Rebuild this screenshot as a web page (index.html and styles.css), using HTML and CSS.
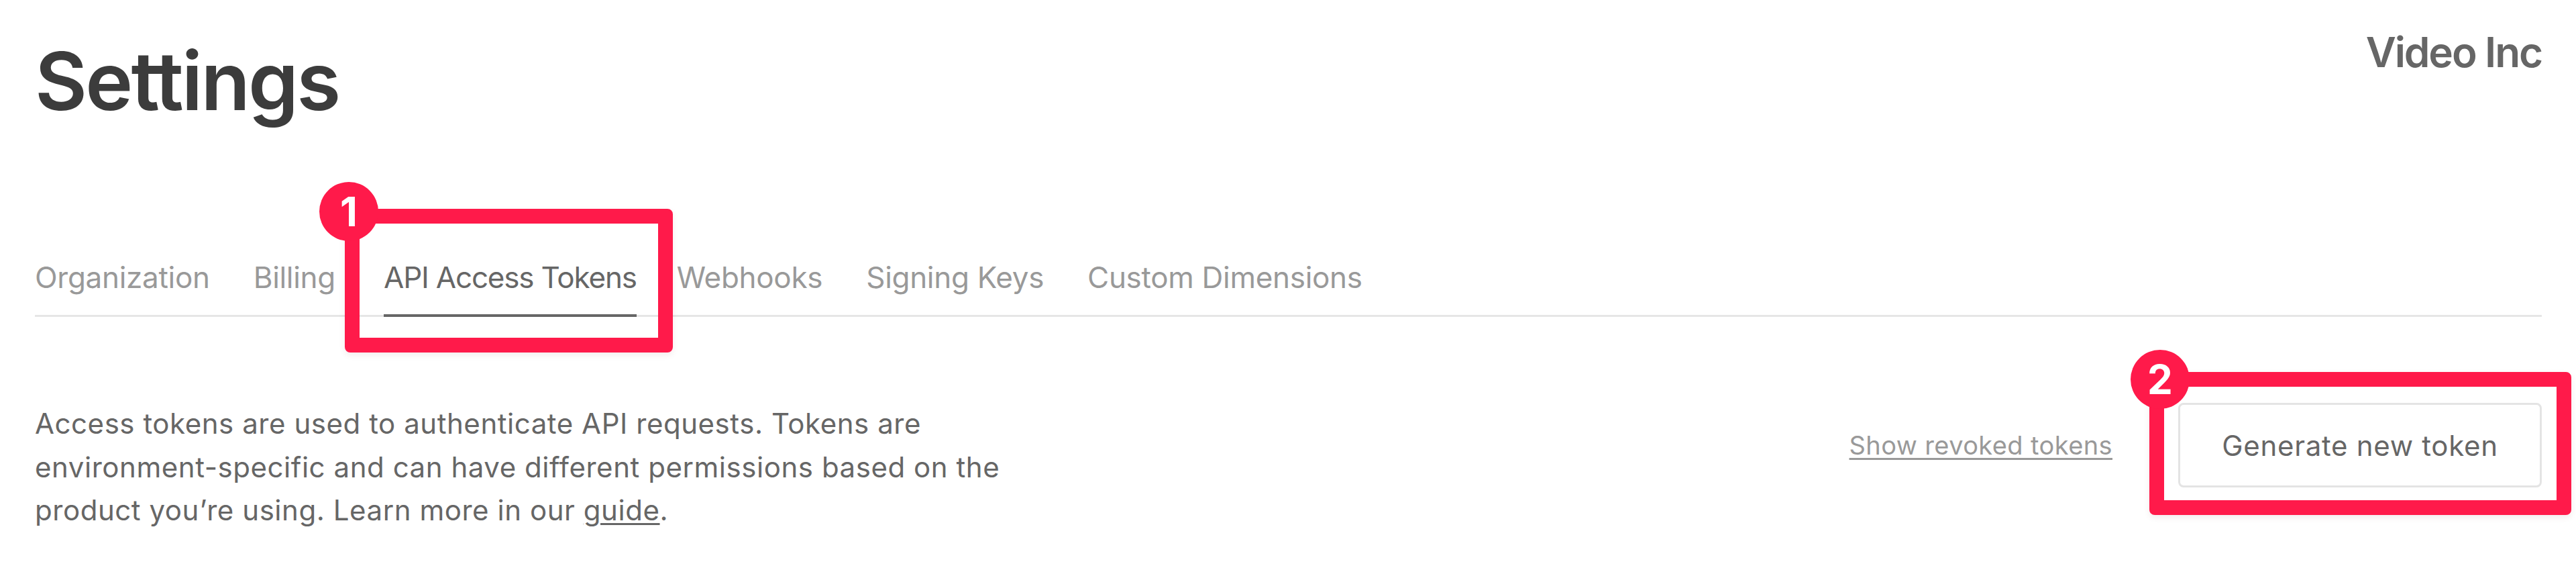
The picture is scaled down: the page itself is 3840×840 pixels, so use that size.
FILE: index.html
```html
<!DOCTYPE html>
<html lang="en">
<head>
<meta charset="utf-8">
<title>Settings</title>
<link rel="stylesheet" href="styles.css">
</head>
<body>
<main class="page">
  <header class="header">
    <h1 class="title">Settings</h1>
    <div class="org">Video Inc</div>
  </header>
  <nav class="tabs">
    <a class="tab">Organization</a>
    <a class="tab">Billing</a>
    <a class="tab tab-active">API Access Tokens</a>
    <a class="tab">Webhooks</a>
    <a class="tab">Signing Keys</a>
    <a class="tab">Custom Dimensions</a>
  </nav>
  <section class="content">
    <p class="intro">Access tokens are used to authenticate API requests. Tokens are environment-specific and can have different permissions based on the product you’re using. Learn more in our <a class="guide">guide</a>.</p>
    <div class="actions">
      <a class="revoked">Show revoked tokens</a>
      <button class="generate">Generate new token</button>
    </div>
  </section>
</main>
<div class="callout callout-one"><span class="badge">1</span></div>
<div class="callout callout-two"><span class="badge">2</span></div>
</body>
</html>
```
FILE: styles.css
```css
* { box-sizing: border-box; }
html, body { margin: 0; background: #fff; }
body { width: 3840px; height: 840px; overflow: hidden; position: relative; font-family: Inter, "Liberation Sans", sans-serif; }
.page { padding: 38px 51px 0 52px; }
.header { display: flex; justify-content: space-between; align-items: flex-start; }
.title { margin: 18px 0 0; font-size: 120px; line-height: 130px; font-weight: 600; color: #3c3c3c; letter-spacing: -2.8px; }
.org { font-size: 62px; line-height: 80px; font-weight: 600; color: #666; letter-spacing: -2.1px; }
.tabs { display: flex; gap: 65px; margin-top: 194px; border-bottom: 3px solid #e6e6e6; }
.tab { font-size: 44px; line-height: 66px; padding-bottom: 22px; margin-bottom: -3px; color: #999; letter-spacing: -0.3px; border-bottom: 4px solid transparent; }
.tab-active { margin-left: 7px; margin-right: -5px; color: #666; letter-spacing: -1.2px; border-bottom-color: #666; }
.content { display: flex; justify-content: space-between; align-items: flex-start; }
.intro { margin: 127px 0 0; width: 1520px; font-size: 42px; line-height: 64.5px; letter-spacing: 0.55px; color: #666; }
.guide { text-decoration: underline; text-underline-offset: 4px; text-decoration-thickness: 3px; }
.actions { display: flex; align-items: center; gap: 98px; margin-top: 128px; }
.revoked { font-size: 38px; color: #999; letter-spacing: 0.4px; text-decoration: underline; text-underline-offset: 5px; text-decoration-thickness: 3px; }
.generate { width: 542px; height: 126px; background: #fff; border: 3px solid #e4e4e4; border-radius: 8px; font: inherit; font-size: 42px; letter-spacing: 0.7px; color: #666; }
.callout { position: absolute; border: 22px solid #ff1a4a; border-radius: 8px; box-shadow: 0 4px 10px rgba(120, 0, 30, 0.08); }
.callout-one { left: 514px; top: 311px; width: 489px; height: 214px; }
.callout-two { left: 3204px; top: 554px; width: 629px; height: 213px; }
.badge { position: absolute; left: -60px; top: -62px; width: 88px; height: 88px; border-radius: 50%; background: #ff1a4a; color: #fff; font-size: 60px; font-weight: 700; display: flex; align-items: center; justify-content: center; }
.callout-two .badge { left: -50px; top: -55px; }
```
